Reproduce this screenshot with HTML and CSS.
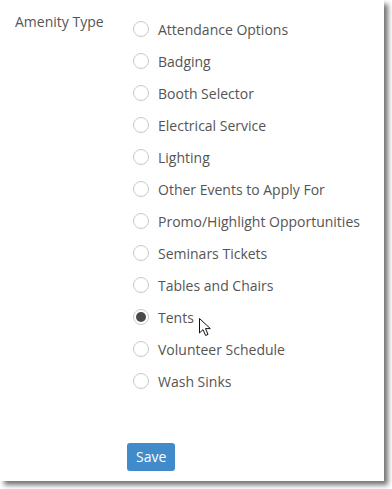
FILE: index.html
```html
<!DOCTYPE html>
<html>
<head>
<meta charset="utf-8">
<link rel="stylesheet" href="styles.css">
</head>
<body>
<div class="panel">
  <div class="field">
    <div class="label">Amenity Type</div>
    <div class="options">
      <div class="opt"><span class="radio"></span><span class="txt">Attendance Options</span></div>
      <div class="opt"><span class="radio"></span><span class="txt">Badging</span></div>
      <div class="opt"><span class="radio"></span><span class="txt">Booth Selector</span></div>
      <div class="opt"><span class="radio"></span><span class="txt">Electrical Service</span></div>
      <div class="opt"><span class="radio"></span><span class="txt">Lighting</span></div>
      <div class="opt"><span class="radio"></span><span class="txt">Other Events to Apply For</span></div>
      <div class="opt"><span class="radio"></span><span class="txt">Promo/Highlight Opportunities</span></div>
      <div class="opt"><span class="radio"></span><span class="txt">Seminars Tickets</span></div>
      <div class="opt"><span class="radio"></span><span class="txt">Tables and Chairs</span></div>
      <div class="opt"><span class="radio checked"></span><span class="txt">Tents</span></div>
      <div class="opt"><span class="radio"></span><span class="txt">Volunteer Schedule</span></div>
      <div class="opt"><span class="radio"></span><span class="txt">Wash Sinks</span></div>
    </div>
  </div>
  <div class="actions">
    <button class="btn">Save</button>
  </div>
  <svg class="cursor" width="14" height="20" viewBox="0 0 14 20">
    <path d="M1.5 1.5 L1.5 16 L5 12.6 L7.6 18.5 L10 17.4 L7.5 11.6 L12.3 11.6 Z" fill="#fff" stroke="#111" stroke-width="1" stroke-linejoin="miter"/>
  </svg>
</div>
</body>
</html>
```

FILE: styles.css
```css
html, body {
  margin: 0;
  padding: 0;
  background: #fff;
}
body {
  width: 392px;
  height: 489px;
  overflow: hidden;
  font-family: "Open Sans", "Liberation Sans", sans-serif;
  font-size: 14px;
  color: #555;
}
.panel {
  position: relative;
  width: 384px;
  height: 481px;
  box-sizing: border-box;
  background: #fff;
  box-shadow: 4px 4px 5px rgba(0, 0, 0, 0.55);
  padding: 12px 0 0 15px;
}
.field {
  display: grid;
  grid-template-columns: 118px 1fr;
}
.label {
  line-height: 20px;
}
.options {
  padding-top: 2px;
  display: flex;
  flex-direction: column;
}
.opt {
  height: 32px;
  display: flex;
  align-items: center;
}
.radio {
  width: 16px;
  height: 16px;
  box-sizing: border-box;
  border: 1px solid #cacaca;
  border-radius: 50%;
  margin-right: 9px;
  margin-bottom: 2px;
  flex: none;
  position: relative;
  background: #fff;
}
.radio.checked::after {
  content: "";
  position: absolute;
  left: 2px;
  top: 2px;
  width: 10px;
  height: 10px;
  border-radius: 50%;
  background: #4a4a4a;
}
.txt {
  line-height: 20px;
}
.actions {
  padding-left: 112px;
  padding-top: 45px;
}
.btn {
  font-family: "Open Sans", "Liberation Sans", sans-serif;
  font-size: 14px;
  line-height: 20px;
  color: #fff;
  background: #428bca;
  border: none;
  border-radius: 3px;
  padding: 4px 9px;
  margin: 0;
}
.cursor {
  position: absolute;
  left: 198px;
  top: 317px;
}
```
